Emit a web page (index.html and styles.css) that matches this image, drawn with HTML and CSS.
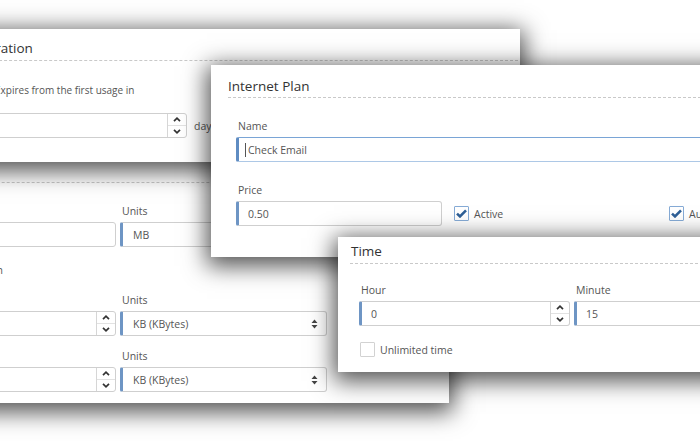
FILE: index.html
```html
<!DOCTYPE html>
<html lang="en">
<head>
<meta charset="UTF-8">
<title>Internet Plan</title>
<link rel="stylesheet" href="styles.css">
</head>
<body>
<div class="canvas">

  <!-- quota window, lowest -->
  <div class="panel panel-quota">
    <div class="panel-head"></div>
    <div class="panel-body">
      <div class="grid-2">
        <div class="field">
          <span class="lbl">&nbsp;</span>
          <div class="box"><input type="text" value=""></div>
        </div>
        <div class="field">
          <label class="lbl">Units</label>
          <div class="box req sel"><select><option>MB</option></select></div>
        </div>
      </div>
      <div class="group-title">Traffic limitation</div>
      <div class="grid-2">
        <div class="field">
          <span class="lbl">&nbsp;</span>
          <div class="box">
            <input type="text" value="">
            <span class="spin">
              <span><svg width="8" height="5" viewBox="0 0 8 5"><path d="M1 4.2 L4 1.2 L7 4.2" fill="none" stroke="#333" stroke-width="1.7"/></svg></span>
              <span><svg width="8" height="5" viewBox="0 0 8 5"><path d="M1 0.8 L4 3.8 L7 0.8" fill="none" stroke="#333" stroke-width="1.7"/></svg></span>
            </span>
          </div>
        </div>
        <div class="field">
          <label class="lbl">Units</label>
          <div class="box req sel">
            <select><option>KB (KBytes)</option></select>
            <svg class="sel-arrow" width="7" height="10" viewBox="0 0 7 10"><path d="M3.5 0.5 L6.5 4 H0.5Z M0.5 6 H6.5 L3.5 9.5Z" fill="#444"/></svg>
          </div>
        </div>
      </div>
      <div class="grid-2 row-gap">
        <div class="field">
          <span class="lbl">&nbsp;</span>
          <div class="box">
            <input type="text" value="">
            <span class="spin">
              <span><svg width="8" height="5" viewBox="0 0 8 5"><path d="M1 4.2 L4 1.2 L7 4.2" fill="none" stroke="#333" stroke-width="1.7"/></svg></span>
              <span><svg width="8" height="5" viewBox="0 0 8 5"><path d="M1 0.8 L4 3.8 L7 0.8" fill="none" stroke="#333" stroke-width="1.7"/></svg></span>
            </span>
          </div>
        </div>
        <div class="field">
          <label class="lbl">Units</label>
          <div class="box req sel">
            <select><option>KB (KBytes)</option></select>
            <svg class="sel-arrow" width="7" height="10" viewBox="0 0 7 10"><path d="M3.5 0.5 L6.5 4 H0.5Z M0.5 6 H6.5 L3.5 9.5Z" fill="#444"/></svg>
          </div>
        </div>
      </div>
    </div>
  </div>

  <!-- expiration window -->
  <div class="panel panel-expiry">
    <div class="panel-head"><h2>Expiration</h2></div>
    <div class="panel-body">
      <label class="lbl lbl-gap">Expires from the first usage in</label>
      <div class="inline-row">
        <div class="box days-box">
          <input type="text" value="">
          <span class="spin">
            <span><svg width="8" height="5" viewBox="0 0 8 5"><path d="M1 4.2 L4 1.2 L7 4.2" fill="none" stroke="#333" stroke-width="1.7"/></svg></span>
            <span><svg width="8" height="5" viewBox="0 0 8 5"><path d="M1 0.8 L4 3.8 L7 0.8" fill="none" stroke="#333" stroke-width="1.7"/></svg></span>
          </span>
        </div>
        <span class="unit-text">days</span>
      </div>
    </div>
  </div>

  <!-- internet plan window -->
  <div class="panel panel-plan">
    <div class="panel-head"><h2>Internet Plan</h2></div>
    <div class="panel-body">
      <div class="field">
        <label class="lbl">Name</label>
        <div class="box req focus"><input type="text" value="Check Email"></div>
      </div>
      <div class="field price-field">
        <label class="lbl">Price</label>
        <div class="price-row">
          <div class="box req"><input type="text" value="0.50"></div>
          <label class="check"><span class="tick on"><svg width="11" height="9" viewBox="0 0 11 9"><path d="M1 4.6 L4 7.4 L10 1.4" fill="none" stroke="#2e5f96" stroke-width="2.6"/></svg></span>Active</label>
          <label class="check"><span class="tick on"><svg width="11" height="9" viewBox="0 0 11 9"><path d="M1 4.6 L4 7.4 L10 1.4" fill="none" stroke="#2e5f96" stroke-width="2.6"/></svg></span>Auto renew</label>
        </div>
      </div>
    </div>
  </div>

  <!-- time window, top -->
  <div class="panel panel-time">
    <div class="panel-head"><h2>Time</h2></div>
    <div class="panel-body">
      <div class="time-grid">
        <div class="field">
          <label class="lbl">Hour</label>
          <div class="box req">
            <input type="text" value="0">
            <span class="spin">
              <span><svg width="8" height="5" viewBox="0 0 8 5"><path d="M1 4.2 L4 1.2 L7 4.2" fill="none" stroke="#333" stroke-width="1.7"/></svg></span>
              <span><svg width="8" height="5" viewBox="0 0 8 5"><path d="M1 0.8 L4 3.8 L7 0.8" fill="none" stroke="#333" stroke-width="1.7"/></svg></span>
            </span>
          </div>
        </div>
        <div class="field">
          <label class="lbl">Minute</label>
          <div class="box req"><input type="text" value="15"></div>
        </div>
      </div>
      <label class="check unlimited"><span class="tick"></span>Unlimited time</label>
    </div>
  </div>

</div>
</body>
</html>
```

FILE: styles.css
```css
body {
    margin: 0;
    background: #fff;
    font-family: 'Open Sans', 'Liberation Sans', sans-serif;
    color: #555;
    overflow: hidden;
}
.canvas {
    position: relative;
    width: 700px;
    height: 441px;
    overflow: hidden;
}

/* windows */
.panel {
    position: absolute;
    background: #fff;
    box-shadow: 0 5px 22px 4px rgba(0,0,0,0.68);
    box-sizing: border-box;
}
.panel-head {
    border-bottom: 1px dashed #c9c9c9;
    box-sizing: border-box;
}
.panel-head h2 {
    margin: 0;
    font-size: 13.5px;
    font-weight: normal;
    line-height: 16px;
    color: #333;
}
.lbl {
    display: block;
    font-size: 10.5px;
    line-height: 14px;
    padding-left: 2px;
    margin-bottom: 4px;
    color: #555;
}

/* inputs */
.box {
    display: flex;
    height: 25px;
    box-sizing: border-box;
    border: 1px solid #cfcfcf;
    border-radius: 3px;
    background: #fff;
    position: relative;
}
.box input, .box select {
    flex: 1;
    min-width: 0;
    border: 0;
    outline: 0;
    background: transparent;
    font-family: inherit;
    font-size: 10.5px;
    color: #555;
    padding: 0 0 0 9px;
    margin: 0;
    -webkit-appearance: none;
    appearance: none;
}
.box.req {
    border-left: 3px solid #6e95c4;
    border-radius: 2px 3px 3px 2px;
}
.box.focus {
    border-color: #7aa5d6 #7aa5d6 #adc8e6 #5f8cc2;
}
.box.focus::after {
    content: '';
    position: absolute;
    left: 6px;
    top: 5px;
    width: 1px;
    height: 14px;
    background: #555;
}
.sel select { padding-left: 10px; }
.sel-arrow {
    position: absolute;
    right: 8px;
    top: 7px;
}
.spin {
    width: 18px;
    display: flex;
    flex-direction: column;
    border-left: 1px solid #d6d6d6;
}
.spin span {
    flex: 1;
    display: flex;
    align-items: center;
    justify-content: center;
}
.spin span + span { border-top: 1px solid #e2e2e2; }

/* checkboxes */
.check {
    display: flex;
    align-items: center;
    gap: 5px;
    font-size: 10.5px;
    color: #555;
    white-space: nowrap;
}
.tick {
    width: 15px;
    height: 15px;
    box-sizing: border-box;
    border: 1px solid #d2d2d2;
    border-radius: 1px;
    display: flex;
    align-items: center;
    justify-content: center;
}
.tick.on { border-color: #86abd6; }

/* expiration */
.panel-expiry {
    left: -40px;
    top: 29px;
    width: 560px;
    height: 133px;
    z-index: 2;
}
.panel-expiry .panel-head {
    margin: 0 2px 0 9px;
    padding: 11px 0 4px;
}
.panel-expiry .panel-body { padding: 22px 0 0 33px; }
.panel-expiry .lbl { font-size: 10px; }
.lbl-gap { margin-bottom: 16px; }
.inline-row {
    display: flex;
    align-items: center;
    gap: 7px;
}
.days-box { width: 194px; }
.unit-text { font-size: 10.5px; color: #555; }

/* quota */
.panel-quota {
    left: -220px;
    top: 140px;
    width: 669px;
    height: 263px;
    z-index: 1;
}
.panel-quota .panel-head {
    height: 43px;
    margin-left: 17px;
}
.panel-quota .panel-body { padding: 21px 0 0 12px; }
.grid-2 {
    display: grid;
    grid-template-columns: 326px 207px;
    column-gap: 2px;
}
.grid-2 .box { width: 100%; }
.grid-2 .field:first-child .box { width: 324px; }
.group-title {
    width: 211px;
    text-align: right;
    font-size: 10.5px;
    line-height: 14px;
    margin: 16px 0;
    color: #555;
}
.row-gap { margin-top: 13px; }

/* internet plan */
.panel-plan {
    left: 211px;
    top: 65px;
    width: 560px;
    height: 192px;
    z-index: 3;
}
.panel-plan .panel-head {
    margin-left: 17px;
    padding: 13px 0 3px;
}
.panel-plan .panel-body { padding: 21px 0 0 25px; }
.price-field { margin-top: 21px; }
.price-row {
    display: grid;
    grid-template-columns: 206px 203px auto;
    column-gap: 12px;
    align-items: center;
}

/* time */
.panel-time {
    left: 338px;
    top: 237px;
    width: 420px;
    height: 135px;
    z-index: 4;
}
.panel-time .panel-head {
    margin-left: 12px;
    padding: 6px 0 4px 1px;
}
.panel-time .panel-body { padding: 19px 0 0 21px; }
.time-grid {
    display: grid;
    grid-template-columns: 211px 1fr;
    column-gap: 4px;
}
.unlimited {
    margin: 16px 0 0 1px;
}
```
